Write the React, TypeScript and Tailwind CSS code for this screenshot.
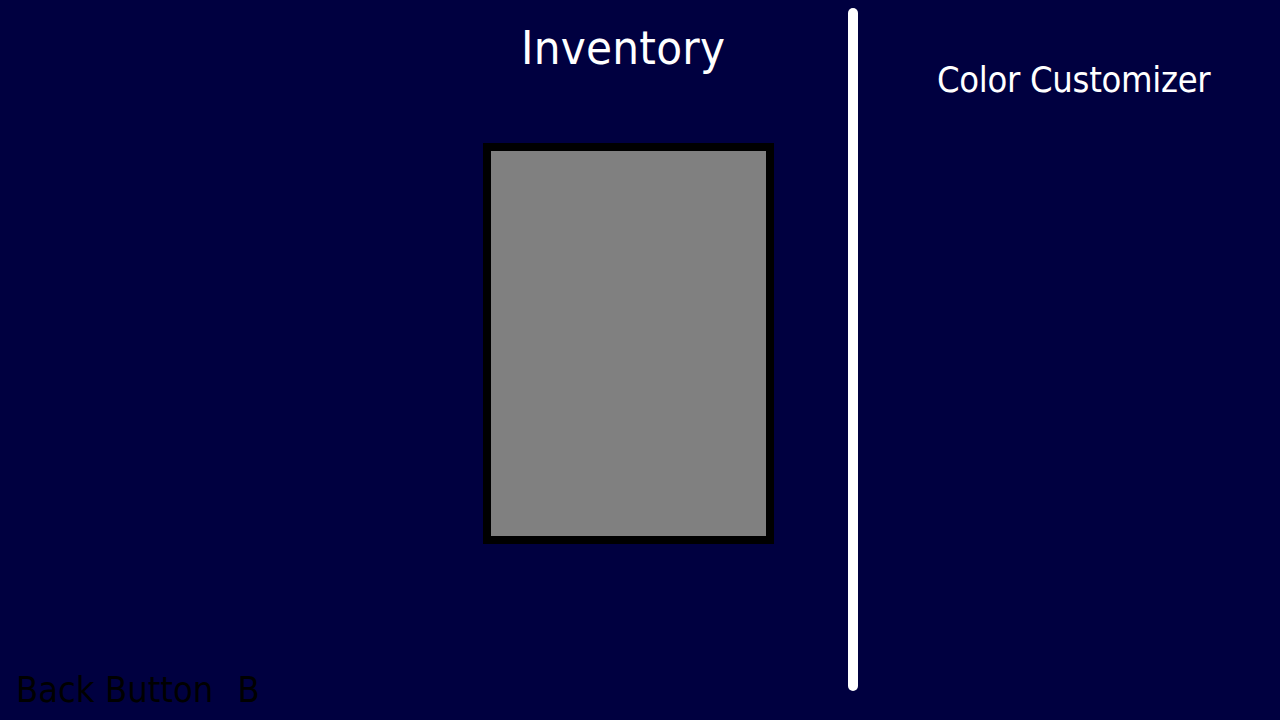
export default function App() {
  return (
    <div
      className="w-[1280px] h-[720px] bg-[#000040] flex items-start overflow-hidden"
      style={{ fontFamily: '"DejaVu Sans Condensed", "DejaVu Sans", sans-serif' }}
    >
      <div className="w-[848px] h-[720px] flex flex-col">
        <h1 className="ml-[521px] mt-[24px] text-[47px] leading-[47px] tracking-[0.25px] text-white font-normal whitespace-nowrap">
          Inventory
        </h1>
        <div className="ml-[483px] mt-[72px] w-[291px] h-[401px] border-8 border-black bg-[#808080]" />
        <div className="mt-auto ml-[16px] mb-[12px] text-[36px] leading-[36px] text-black whitespace-nowrap flex">
          <span>Back Button</span>
          <span className="ml-[24px]">B</span>
        </div>
      </div>
      <div className="mt-[8px] w-[10px] h-[683px] rounded-full bg-white shrink-0" />
      <div className="flex-1">
        <h2 className="ml-[79px] mt-[62px] text-[36px] leading-[36px] tracking-[-0.3px] text-white font-normal whitespace-nowrap">
          Color Customizer
        </h2>
      </div>
    </div>
  );
}
